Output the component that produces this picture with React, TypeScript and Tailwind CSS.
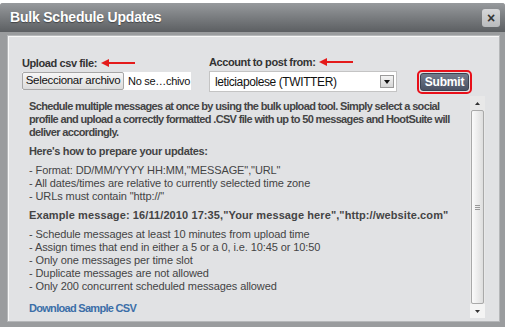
import React from "react";

function RedArrow() {
  return (
    <svg width="36" height="10" viewBox="0 0 36 10" className="ml-[3px] shrink-0">
      <line x1="4" y1="5" x2="35" y2="5" stroke="#e41b1b" strokeWidth="2" />
      <path d="M1 5 L9 1 L9 9 Z" fill="#e41b1b" />
    </svg>
  );
}

const notes1 = [
  '- Format: DD/MM/YYYY HH:MM,"MESSAGE","URL"',
  "- All dates/times are relative to currently selected time zone",
  '- URLs must contain "http://"',
];

const notes2 = [
  "- Schedule messages at least 10 minutes from upload time",
  "- Assign times that end in either a 5 or a 0, i.e. 10:45 or 10:50",
  "- Only one messages per time slot",
  "- Duplicate messages are not allowed",
  "- Only 200 concurrent scheduled messages allowed",
];

export default function App() {
  return (
    <div
      className="w-[515px] h-[336px] bg-white pt-[3px]"
      style={{ fontFamily: '"Liberation Sans", Arial, sans-serif' }}
    >
      <div className="w-[505px] h-[324px] flex flex-col bg-[#9a9c9e] rounded-t-[3px]">
        {/* title bar */}
        <div className="h-[29px] flex items-center justify-between pl-[10px] pr-[5px] bg-gradient-to-b from-[#979a9d] to-[#5c5f62] rounded-t-[3px]">
          <span className="text-white font-bold text-[14px] tracking-[-0.2px] [text-shadow:0_1px_1px_rgba(0,0,0,0.4)]">
            Bulk Schedule Updates
          </span>
          <div className="w-[18px] h-[18px] rounded-[3px] bg-gradient-to-b from-[#d6d7d9] to-[#b9bbbd] flex items-center justify-center text-[#333] font-bold text-[14px] leading-none">
            ×
          </div>
        </div>

        {/* body */}
        <div className="flex-1 pt-[3px] pl-[7px] pr-[5px] pb-[5px]">
          <div className="h-full bg-[#e1e2e4] border border-[#b5b7b9] shadow-[inset_1px_1px_0_#f7f7f7] flex flex-col pl-[14px] pr-[14px]">
            {/* form row */}
            <div className="flex items-end pt-[20px] text-[#333]">
              <div className="flex flex-col w-[187px]">
                <div className="flex items-center h-[12px] text-[11px] font-bold tracking-[-0.4px] whitespace-nowrap">
                  Upload csv file:
                  <RedArrow />
                </div>
                <div className="mt-[3px] mb-[2px] w-[169px] h-[18px] bg-white flex items-center overflow-hidden whitespace-nowrap">
                  <div className="shrink-0 w-[102px] h-[18px] flex items-center justify-center border border-[#a6a6a6] rounded-[2px] bg-gradient-to-b from-[#f6f6f6] to-[#dcdcdc] text-[11.5px] tracking-[-0.3px] text-[#111]">
                    Seleccionar archivo
                  </div>
                  <span className="ml-[4px] text-[11px] tracking-[-0.3px] text-[#111]">No se…chivo</span>
                </div>
              </div>
              <div className="flex flex-col w-[208px]">
                <div className="flex items-center h-[12px] text-[11px] font-bold tracking-[-0.4px] whitespace-nowrap">
                  Account to post from:
                  <RedArrow />
                </div>
                <div className="mt-[3px] w-[188px] h-[21px] bg-white border border-[#c4c4c4] flex items-center justify-between pl-[5px] pr-[2px]">
                  <span className="text-[12px] tracking-[-0.4px] text-[#111] whitespace-nowrap">leticiapolese (TWITTER)</span>
                  <div className="w-[14px] h-[13px] border border-[#9a9a9a] bg-gradient-to-b from-[#f4f4f4] to-[#d6d6d6] flex items-center justify-center">
                    <svg width="6" height="4" viewBox="0 0 6 4">
                      <path d="M0 0 L6 0 L3 4 Z" fill="#111" />
                    </svg>
                  </div>
                </div>
              </div>
              <div className="w-[55px] h-[24px] rounded-[5px] border-2 border-[#e8101a] p-[1px] mb-[-2px]">
                <div className="h-full rounded-[3px] border border-[#3b4252] bg-gradient-to-b from-[#737b8c] to-[#4a5264] flex items-center justify-center text-white font-bold text-[12px] tracking-[-0.2px]">
                  Submit
                </div>
              </div>
            </div>

            {/* scrolling text */}
            <div className="flex-1 flex mt-[4px] mb-[3px] min-h-0">
              <div className="flex-1 pl-[7px] pr-[3px] pt-[4px] text-[11px] leading-[13px] text-[#444] overflow-hidden">
                <p className="font-bold tracking-[-0.65px]">
                  Schedule multiple messages at once by using the bulk upload tool. Simply select a social profile and upload a correctly formatted .CSV file with up to 50 messages and HootSuite will deliver accordingly.
                </p>
                <p className="font-bold tracking-[-0.35px] mt-[6px]">Here's how to prepare your updates:</p>
                <div className="mt-[6px] tracking-[-0.1px]">
                  {notes1.map((n) => (
                    <div key={n}>{n}</div>
                  ))}
                </div>
                <p className="font-bold tracking-[0.1px] mt-[6px] whitespace-nowrap">
                  Example message: 16/11/2010 17:35,"Your message here","http://website.com"
                </p>
                <div className="mt-[6px] tracking-[-0.1px]">
                  {notes2.map((n) => (
                    <div key={n}>{n}</div>
                  ))}
                </div>
                <p className="font-bold tracking-[-0.7px] mt-[9px] text-[#3b6ea8]">Download Sample CSV</p>
              </div>
              <div className="w-[15px] flex flex-col bg-[#e8e8e8]">
                <div className="h-[14px] flex items-center justify-center">
                  <svg width="5" height="3" viewBox="0 0 5 3">
                    <path d="M0 3 L5 3 L2.5 0 Z" fill="#333" />
                  </svg>
                </div>
                <div className="flex-1 mx-[1px] rounded-[2px] border border-[#a9a9a9] bg-gradient-to-r from-[#fbfbfb] to-[#dedede] flex items-center justify-center">
                  <div className="w-[5px] flex flex-col gap-[1px]">
                    <div className="h-px bg-[#999]" />
                    <div className="h-px bg-[#999]" />
                    <div className="h-px bg-[#999]" />
                  </div>
                </div>
                <div className="h-[14px] flex items-center justify-center bg-[#f4f4f4]">
                  <svg width="5" height="3" viewBox="0 0 5 3">
                    <path d="M0 0 L5 0 L2.5 3 Z" fill="#333" />
                  </svg>
                </div>
              </div>
            </div>
          </div>
        </div>
      </div>
    </div>
  );
}
